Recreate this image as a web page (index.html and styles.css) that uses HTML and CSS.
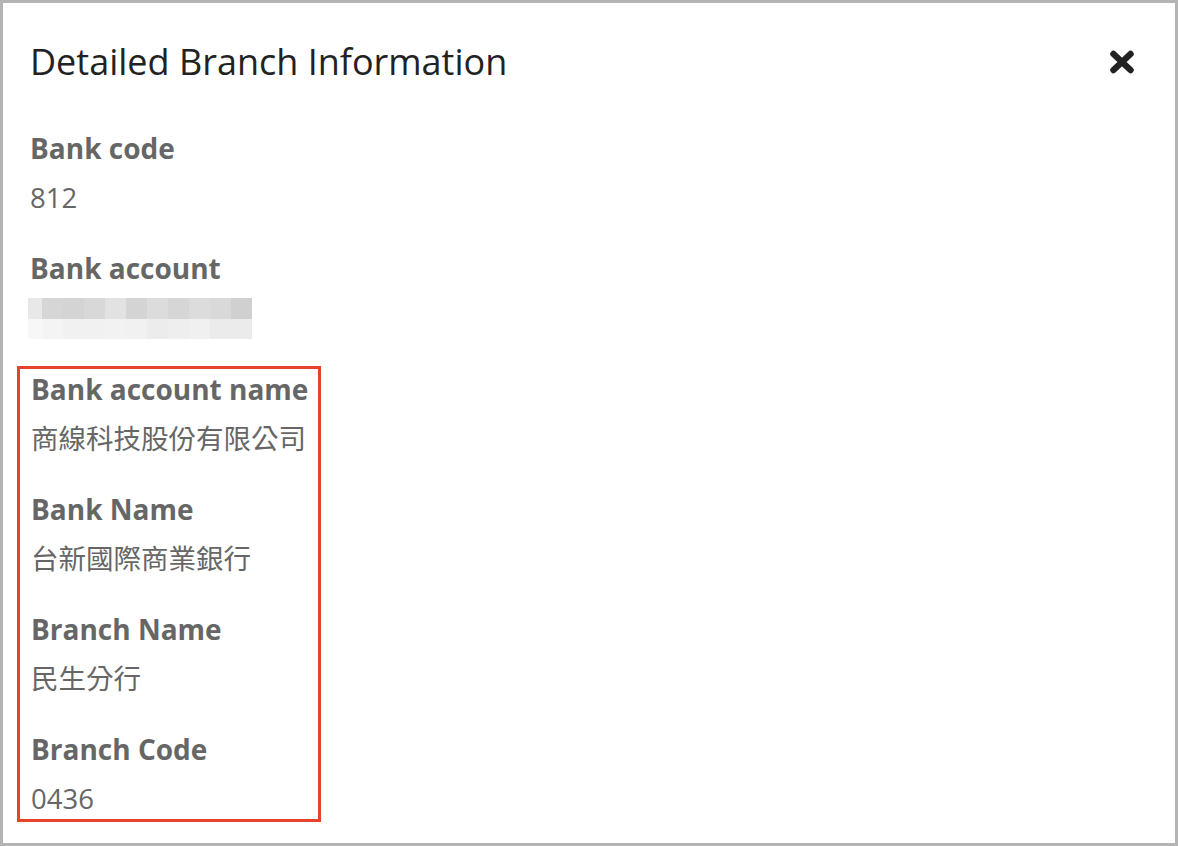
FILE: index.html
```html
<!DOCTYPE html>
<html lang="zh-Hant">
<head>
    <meta charset="UTF-8">
    <meta name="viewport" content="width=device-width, initial-scale=1.0">
    <title>Detailed Branch Information</title>
    <link rel="stylesheet" href="styles.css">
</head>
<body>
    <div class="modal">
        <div class="modal-header">
            <h2 class="modal-title">Detailed Branch Information</h2>
            <button class="close-btn" aria-label="Close">
                <svg width="26" height="24" viewBox="0 0 26 24">
                    <path d="M4.5 4 L21.5 20 M21.5 4 L4.5 20" stroke="#222" stroke-width="6.5" stroke-linecap="round" fill="none"/>
                </svg>
            </button>
        </div>

        <div class="modal-body">
            <div class="field">
                <div class="field-label">Bank code</div>
                <div class="field-value">812</div>
            </div>
            <div class="field">
                <div class="field-label">Bank account</div>
                <!-- account number is masked -->
                <div class="field-value masked"></div>
            </div>

            <div class="highlight">
                <div class="field">
                    <div class="field-label">Bank account name</div>
                    <div class="field-value">商線科技股份有限公司</div>
                </div>
                <div class="field">
                    <div class="field-label">Bank Name</div>
                    <div class="field-value">台新國際商業銀行</div>
                </div>
                <div class="field">
                    <div class="field-label">Branch Name</div>
                    <div class="field-value">民生分行</div>
                </div>
                <div class="field">
                    <div class="field-label">Branch Code</div>
                    <div class="field-value">0436</div>
                </div>
            </div>
        </div>
    </div>
</body>
</html>
```

FILE: styles.css
```css
* {
    box-sizing: border-box;
}

body {
    margin: 0;
    background: #fff;
    font-family: "Open Sans", "Noto Sans CJK TC", sans-serif;
}

.modal {
    width: 1178px;
    height: 846px;
    border: 3px solid #b4b4b4;
    background: #fff;
    overflow: hidden;
}

.modal-header {
    display: flex;
    justify-content: space-between;
    align-items: center;
    padding: 34px 40px 0 27px;
}

.modal-title {
    margin: 0;
    font-size: 36px;
    line-height: 50px;
    font-weight: 400;
    color: #222;
}

.close-btn {
    background: none;
    border: none;
    padding: 0;
    cursor: pointer;
    display: flex;
}

.modal-body {
    padding: 41px 27px 0 27px;
}

.field {
    margin-bottom: 30px;
}

.field-label {
    font-size: 28px;
    line-height: 40px;
    font-weight: 700;
    color: #666;
    margin-bottom: 10px;
}

.field-value {
    font-size: 27.5px;
    line-height: 40px;
    color: #666;
}

.masked {
    width: 224px;
    height: 41px;
    margin-top: 2px;
    margin-left: -2px;
    margin-bottom: -3px;
    background:
        linear-gradient(to right,
            #e8e8e8 0 14px, #d6d6d6 14px 35px, #d4d4d4 35px 56px, #d8d8d8 56px 77px,
            #e2e2e2 77px 98px, #d4d4d4 98px 119px, #dcdcdc 119px 140px, #d6d6d6 140px 161px,
            #dcdcdc 161px 182px, #d9d9d9 182px 203px, #d0d0d0 203px 224px) top / 100% 21px no-repeat,
        linear-gradient(to right,
            #f7f7f7 0 14px, #f4f4f4 14px 35px, #f1f1f1 35px 56px, #f1f1f1 56px 77px,
            #f2f2f2 77px 98px, #f1f1f1 98px 119px, #ececec 119px 140px, #eeeeee 140px 161px,
            #f0f0f0 161px 182px, #ebebeb 182px 203px, #ebebeb 203px 224px) bottom / 100% 20px no-repeat;
}

/* red outline round the branch fields */
.highlight {
    width: fit-content;
    margin-left: -13px;
    padding: 0 10px 0 11px;
    border: 3px solid #e8432a;
}

.highlight .field:last-child {
    margin-bottom: 0;
}
```
